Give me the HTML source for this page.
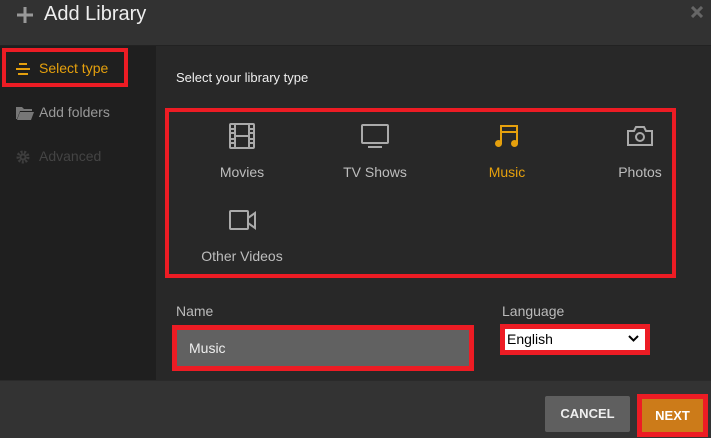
<!DOCTYPE html>
<html><head><meta charset="utf-8"><style>
*{margin:0;padding:0;box-sizing:border-box}
body{width:711px;height:438px;background:#282828;font-family:"Liberation Sans",sans-serif;position:relative;overflow:hidden;color:#aaa}
.a{position:absolute}
.red{position:absolute;border:4px solid #ed1c24}
.t{position:absolute;font-size:14px;color:#bdbdbd;text-align:center;width:120px}
</style></head><body>
<div class="a" style="left:0;top:0;width:711px;height:46px;background:#323232;border-bottom:1px solid #222"></div>
<svg class="a" style="left:16px;top:6px" width="18" height="18"><path d="M9 1v16M1 9h16" stroke="#999" stroke-width="3"/></svg>
<div class="a" style="left:44px;top:3px;font-size:20px;color:#eee">Add Library</div>
<svg class="a" style="left:691px;top:6px" width="12" height="12"><path d="M1 1L11 11M11 1L1 11" stroke="#666" stroke-width="3"/></svg>
<div class="a" style="left:0;top:46px;width:156px;height:334px;background:#1f1f1f"></div>
<div class="red" style="left:2px;top:48px;width:126px;height:39px"></div>
<svg class="a" style="left:15px;top:63px" width="16" height="12"><path d="M4 1h8M1 6h14M3 11h10" stroke="#e5a00d" stroke-width="2"/></svg>
<div class="a" style="left:39px;top:60px;font-size:14px;color:#e5a00d">Select type</div>
<svg class="a" style="left:16px;top:106px" width="18" height="14"><path d="M0 1h6l2 2h8v2H4L1 13H0z M4 6h14l-3 8H1z" fill="#777"/></svg>
<div class="a" style="left:39px;top:104px;font-size:14px;color:#999">Add folders</div>
<svg class="a" style="left:16px;top:150px" width="14" height="14"><circle cx="7" cy="7" r="5" fill="none" stroke="#3e3e3e" stroke-width="3" stroke-dasharray="2 1.5"/><circle cx="7" cy="7" r="3.5" fill="#3e3e3e"/><circle cx="7" cy="7" r="1.5" fill="#1f1f1f"/></svg>
<div class="a" style="left:39px;top:148px;font-size:14px;color:#444">Advanced</div>
<div class="a" style="left:176px;top:70px;font-size:13px;color:#eee">Select your library type</div>
<div class="red" style="left:165px;top:108px;width:511px;height:170px"></div>
<svg class="a" style="left:229px;top:123px" width="27" height="27" fill="none" stroke="#aaa" stroke-width="2"><rect x="1" y="1" width="24" height="24" rx="1"/><path d="M6 1v24M20 1v24M6 13h14M1 6h5M1 10h5M1 16h5M1 20h5M20 6h5M20 10h5M20 16h5M20 20h5"/></svg>
<div class="t" style="left:182px;top:164px">Movies</div>
<svg class="a" style="left:361px;top:124px" width="28" height="24" fill="none" stroke="#aaa" stroke-width="2"><rect x="1" y="1" width="26" height="18" rx="1"/><path d="M7 23h14"/></svg>
<div class="t" style="left:315px;top:164px">TV Shows</div>
<svg class="a" style="left:494px;top:124px" width="26" height="24"><path d="M7 20V2h16v18M7 8h16" fill="none" stroke="#e5a00d" stroke-width="2"/><circle cx="4.5" cy="19.5" r="3.5" fill="#e5a00d"/><circle cx="20.5" cy="19.5" r="3.5" fill="#e5a00d"/></svg>
<div class="t" style="left:447px;top:164px;color:#e5a00d">Music</div>
<svg class="a" style="left:626px;top:125px" width="28" height="22" fill="none" stroke="#aaa" stroke-width="2"><path d="M2 6h6l2-4h8l2 4h6v14H2z"/><circle cx="14" cy="12" r="4"/></svg>
<div class="t" style="left:580px;top:164px">Photos</div>
<svg class="a" style="left:229px;top:210px" width="28" height="21" fill="none" stroke="#aaa" stroke-width="2"><rect x="1" y="1" width="18" height="18" rx="1"/><path d="M19 8l7-5v15l-7-5"/></svg>
<div class="t" style="left:182px;top:248px">Other Videos</div>
<div class="a" style="left:176px;top:303px;font-size:14px;color:#bbb">Name</div>
<div class="a" style="left:502px;top:303px;font-size:14px;color:#bbb">Language</div>
<div class="a" style="left:172px;top:325px;width:302px;height:46px;background:#ed1c24"></div>
<div class="a" style="left:177px;top:330px;width:292px;height:36px;background:#616161;color:#eee;font-size:14px;padding:10px 12px">Music</div>
<div class="a" style="left:500px;top:324px;width:150px;height:31px;background:#ed1c24"></div>
<div class="a" style="left:505px;top:329px;width:140px;height:21px;background:#fff;color:#000;font-size:14px;padding:2px 2px">English</div>
<svg class="a" style="left:628px;top:335px" width="11" height="8"><path d="M1 1l4.5 4.5L10 1" fill="none" stroke="#000" stroke-width="2"/></svg>
<div class="a" style="left:0;top:380px;width:711px;height:58px;background:#333;border-top:1px solid #2a2a2a"></div>
<div class="a" style="left:545px;top:396px;width:85px;height:36px;background:#5f5f5f;border-radius:2px;color:#eee;font-size:13px;font-weight:bold;text-align:center;line-height:36px">CANCEL</div>
<div class="a" style="left:637px;top:394px;width:71px;height:43px;background:#ed1c24"></div>
<div class="a" style="left:642px;top:399px;width:61px;height:33px;background:#cc7b19;color:#fff;font-size:13px;font-weight:bold;text-align:center;line-height:33px">NEXT</div>
</body></html>
